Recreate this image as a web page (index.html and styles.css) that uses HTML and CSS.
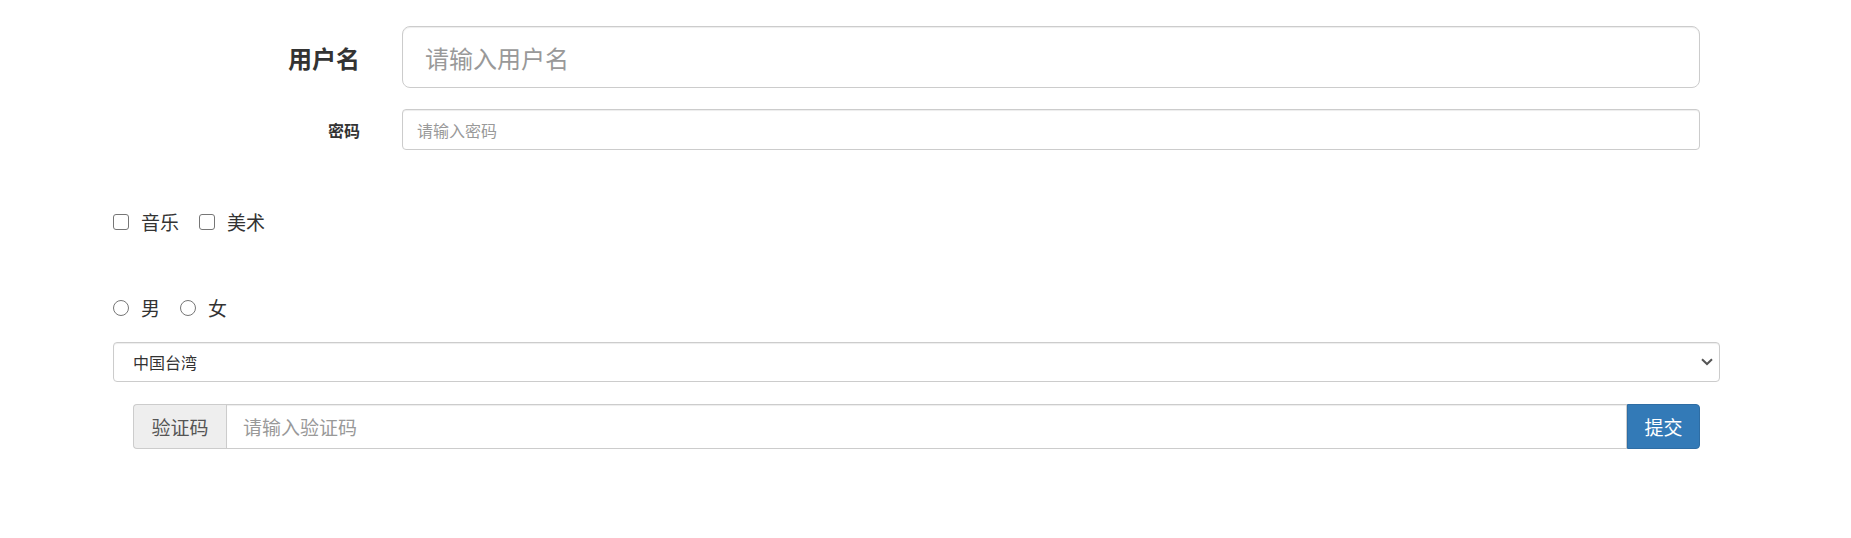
FILE: index.html
```html
<!DOCTYPE html>
<html lang="zh-CN">
<head>
    <meta charset="UTF-8">
    <meta name="viewport" content="width=device-width, initial-scale=1.0">
    <title>表单</title>
    <link rel="stylesheet" href="styles.css">
</head>
<body>
    <form class="container">
        <div class="form-row row-lg">
            <label class="row-label" for="user">用户名</label>
            <input type="text" id="user" class="form-control" placeholder="请输入用户名">
        </div>
        <div class="form-row row-sm">
            <label class="row-label" for="pwd">密码</label>
            <input type="password" id="pwd" class="form-control" placeholder="请输入密码">
        </div>

        <div class="check-row checks">
            <label class="check"><input type="checkbox"> 音乐</label>
            <label class="check"><input type="checkbox"> 美术</label>
        </div>

        <div class="check-row radios">
            <label class="check"><input type="radio" name="sex"> 男</label>
            <label class="check"><input type="radio" name="sex"> 女</label>
        </div>

        <div class="select-wrap">
            <select class="form-control select">
                <option>中国台湾</option>
                <option>中国大陆</option>
                <option>中国香港</option>
            </select>
            <svg class="chevron" width="12" height="8" viewBox="0 0 12 8">
                <path d="M1 1.2 L6 6 L11 1.2" fill="none" stroke="#555" stroke-width="2"/>
            </svg>
        </div>

        <div class="input-group">
            <span class="addon">验证码</span>
            <input type="text" class="form-control" placeholder="请输入验证码">
            <button type="button" class="btn">提交</button>
        </div>
    </form>
</body>
</html>
```

FILE: styles.css
```css
* {
    margin: 0;
    padding: 0;
    box-sizing: border-box;
    font-family: "Noto Sans CJK SC", "Liberation Sans", sans-serif;
}

body {
    background: #fff;
    color: #333;
}

.container {
    width: 1720px;
    padding-left: 113px;
    padding-top: 26px;
}

.form-control {
    display: block;
    width: 100%;
    border: 1px solid #ccc;
    border-radius: 4px;
    background: #fff;
    color: #555;
    box-shadow: inset 0 1px 1px rgba(0, 0, 0, 0.075);
    outline: none;
}

.form-control::placeholder {
    color: #999;
}

.form-row {
    display: flex;
    align-items: center;
    margin: 0 20px;
}

.row-label {
    width: 227px;
    text-align: right;
    font-weight: bold;
    margin-right: 42px;
    flex-shrink: 0;
}

.row-lg .row-label {
    font-size: 24px;
}

.row-lg .form-control {
    height: 62px;
    font-size: 24px;
    padding: 0 22px;
    border-radius: 8px;
}

.row-sm {
    margin-top: 21px;
}

.row-sm .row-label {
    font-size: 16px;
}

.row-sm .form-control {
    height: 41px;
    font-size: 16px;
    padding: 0 14px;
}

.check-row {
    display: flex;
    align-items: center;
    gap: 20px;
    height: 26px;
    font-size: 19px;
}

.checks {
    margin-top: 59px;
}

.radios {
    margin-top: 60px;
}

.check {
    display: flex;
    align-items: center;
    gap: 12px;
    line-height: 26px;
}

.check input {
    appearance: none;
    -webkit-appearance: none;
    width: 16px;
    height: 16px;
    border: 1.5px solid #767676;
    border-radius: 3px;
    background: #fff;
    margin: 0;
}

.check input[type="radio"] {
    border-radius: 50%;
}

.select-wrap {
    position: relative;
    margin-top: 21px;
}

.select {
    appearance: none;
    -webkit-appearance: none;
    height: 40px;
    font-size: 16px;
    padding: 0 30px 0 19px;
    color: #333;
}

.chevron {
    position: absolute;
    right: 7px;
    top: 16px;
    pointer-events: none;
}

.input-group {
    display: flex;
    margin: 22px 20px 0;
    height: 45px;
}

.addon {
    width: 93px;
    flex-shrink: 0;
    display: flex;
    align-items: center;
    justify-content: center;
    font-size: 19px;
    color: #555;
    background: #eee;
    border: 1px solid #ccc;
    border-right: none;
    border-radius: 4px 0 0 4px;
}

.input-group .form-control {
    height: 45px;
    border-radius: 0;
    font-size: 19px;
    padding: 0 16px;
}

.btn {
    width: 73px;
    flex-shrink: 0;
    font-size: 19px;
    color: #fff;
    background: #337ab7;
    border: 1px solid #2e6da4;
    border-radius: 0 4px 4px 0;
    cursor: pointer;
}
```
